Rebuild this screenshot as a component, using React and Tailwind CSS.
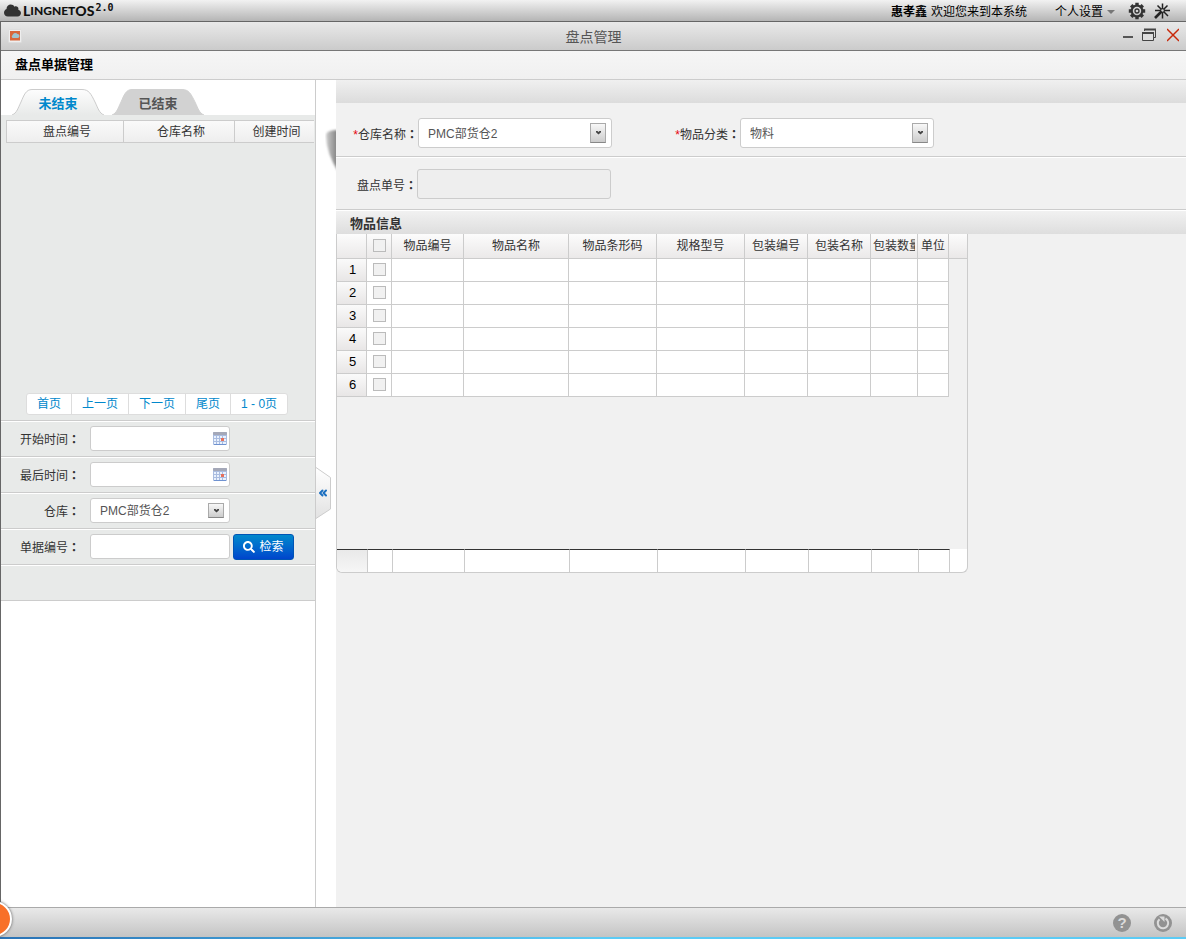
import React, { useState } from "react";
import { ChevronsLeft } from "lucide-react";
import { FaCloud, FaSearch } from "react-icons/fa";

const columns = [
  { label: "物品编号", width: "w-[72px]" },
  { label: "物品名称", width: "w-[105px]" },
  { label: "物品条形码", width: "w-[88px]" },
  { label: "规格型号", width: "w-[88px]" },
  { label: "包装编号", width: "w-[63px]" },
  { label: "包装名称", width: "w-[63px]" },
  { label: "包装数量", width: "w-[47px]" },
  { label: "单位", width: "w-[31px]" },
];

const pages = ["首页", "上一页", "下一页", "尾页", "1 - 0页"];

function Label({ htmlFor, required, className = "", children }) {
  return (
    <label htmlFor={htmlFor} className={`shrink-0 pt-[2px] text-right whitespace-nowrap ${className}`}>
      {required && <span className="text-red-600">*</span>}
      {children}
      <span className="font-['Noto_Sans_CJK_TC',sans-serif] font-bold">：</span>
    </label>
  );
}

function Select({ id, options, size = "large" }) {
  const large = size === "large";
  return (
    <div className={`relative ${large ? "w-[194px]" : "w-[140px]"}`}>
      <select
        id={id}
        className={`block w-full appearance-none rounded-[3px] border border-[#ccc] bg-white pt-px pl-[9px] text-[#555] ${large ? "h-[30px]" : "h-[25px]"}`}
      >
        {options.map((o) => (
          <option key={o}>{o}</option>
        ))}
      </select>
      <span
        className={`pointer-events-none absolute flex items-center justify-center border border-[#aaa] border-b-[#888] bg-gradient-to-b from-[#f8f8f8] to-[#ccc] ${large ? "top-[5px] right-[6px] h-5 w-4" : "top-[5px] right-[6px] h-[15px] w-4"}`}
      >
        <svg width="5" height="4" viewBox="0 0 5 4">
          <path d="M0 0h1.5l1 1 1-1H5v1.2L2.5 3.5 0 1.2z" fill="#444" />
        </svg>
      </span>
    </div>
  );
}

function CalendarIcon() {
  return (
    <svg width="14" height="13" viewBox="0 0 14 13">
      <rect width="14" height="13" rx="1" fill="#a9bce0" />
      <rect width="14" height="3" rx="1" fill="#a4a8b8" />
      <path
        d="M1 4h2v2H1zM4 4h2v2H4zM7 4h2v2H7zM10 4h3v2h-3zM1 7h2v2H1zM4 7h2v2H4zM7 7h1v2H7zM11 7h2v2h-2zM1 10h2v2H1zM4 10h2v2H4zM7 10h2v2H7zM10 10h3v2h-3z"
        fill="#e9f1fd"
      />
      <rect x="8" y="6" width="3" height="3" fill="#e5705c" />
      <path d="M1 12.500h12" stroke="#6f92d0" />
    </svg>
  );
}

function Tab({ active, onClick, children }) {
  return (
    <button
      type="button"
      onClick={onClick}
      className={`relative h-[26px] w-[92px] pt-1 text-center text-[13px] font-bold ${active ? "text-[#08c]" : "text-[#555]"}`}
    >
      <svg className="absolute inset-0 h-full w-full" viewBox="0 0 92 26">
        <defs>
          <linearGradient id="tabFill" x1="0" y1="0" x2="0" y2="1">
            <stop offset="0" stopColor="#fdfdfd" />
            <stop offset="1" stopColor="#e8eae9" />
          </linearGradient>
        </defs>
        <path
          d="M0 26C5 24 6 19 9 13C12 6 14 .5 20 .5H70C77 .5 79 5 83 13C86 19 87 24 92 26"
          fill={active ? "url(#tabFill)" : "#d2d2d2"}
          stroke={active ? "#ccc" : "#d2d2d2"}
        />
      </svg>
      <span className="relative">{children}</span>
    </button>
  );
}

function FilterRow({ children }) {
  return (
    <div className="flex h-9 items-center border-t border-[#ccc] shadow-[inset_0_1px_0_#fff]">
      {children}
    </div>
  );
}

function DateInput({ id }) {
  return (
    <div className="relative w-[140px]">
      <input id={id} className="block h-[25px] w-full rounded-[3px] border border-[#ccc] bg-white px-2" />
      <span className="pointer-events-none absolute top-[6px] right-[3px]">
        <CalendarIcon />
      </span>
    </div>
  );
}

function Check({ label }) {
  return (
    <input
      type="checkbox"
      aria-label={label}
      className="mx-auto mb-[2px] block h-[13px] w-[13px] appearance-none border border-[#bbb] bg-[#f1f1f1] checked:bg-[#08c]"
    />
  );
}

function TopBar() {
  return (
    <header className="flex h-[22px] items-center border-b border-[#666] bg-gradient-to-b from-[#f2f2f2] to-[#b5b5b5] pr-4 text-black">
      <div className="flex items-center pl-1">
        <FaCloud className="h-[17px] w-[17px] text-[#333]" />
        <div className="ml-[2px] flex items-center font-[Lato,sans-serif] font-black leading-none text-[#111]">
          <span className="text-[14px]">L</span>
          <span className="pt-px text-[12px]">INGNET</span>
          <span className="text-[14px]">OS</span>
          <span className="ml-px pb-[6px] font-['DejaVu_Sans_Mono',monospace] text-[10px] font-bold">2.0</span>
        </div>
      </div>
      <div className="ml-auto flex items-center">
        <div className="flex pt-[2px]">
          <b>惠孝鑫</b>
          <span className="ml-1">欢迎您来到本系统</span>
        </div>
        <button type="button" className="ml-7 flex items-center pt-[2px]">
          个人设置
          <span className="ml-1 border-x-4 border-t-4 border-x-transparent border-t-[#777]" />
        </button>
        <button type="button" aria-label="设置" className="ml-[13px]">
          <svg width="18" height="18" viewBox="0 0 18 18" fill="none" stroke="#333">
            <circle cx="9" cy="9" r="5.3" strokeWidth="2.2" />
            <circle cx="9" cy="9" r="2" strokeWidth="1.3" />
            <path
              d="M9 .8v3M9 14.2v3M.8 9h3M14.2 9h3M3.2 3.2l2 2M12.8 12.8l2 2M3.2 14.8l2-2M12.8 5.2l2-2"
              strokeWidth="3.400"
            />
          </svg>
        </button>
        <button type="button" aria-label="主题" className="ml-2">
          <svg width="16" height="16" viewBox="0 0 16 16" fill="none" stroke="#222">
            <path d="M8.500 .5v5M8.500 10v5.500M1 7.500h5M11 7.500h5M3.500 2.500l3.500 3.500M13.500 2.500L10 6M10 9l4 4" strokeWidth="1.5" />
            <path d="M7.500 8.500L1 15" strokeWidth="2.600" />
            <circle cx="8.500" cy="7.500" r="1.900" strokeWidth="1.2" />
          </svg>
        </button>
      </div>
    </header>
  );
}

function TitleBar() {
  return (
    <div className="flex h-[29px] items-center border-b border-[#777] bg-gradient-to-b from-[#e9e9e9] to-[#cbcbcb] pr-[7px] pl-[7px]">
      <div className="flex flex-1">
        <svg width="14" height="14" viewBox="0 0 14 14">
          <rect x=".5" y=".5" width="13" height="13" rx="1" fill="#eee" stroke="#ddd" />
          <rect x="2" y="2" width="10" height="9.500" fill="#d8663a" />
          <path d="M4.500 9a2 2 0 0 1 0-3 3 3 0 0 1 5-1 2 2 0 0 1 0 4z" fill="#9fc4cf" />
        </svg>
      </div>
      <h1 className="pt-px text-[14px] text-[#555]">盘点管理</h1>
      <div className="flex flex-1 items-center justify-end pb-[2px]">
        <button type="button" aria-label="最小化">
          <svg width="10" height="14" viewBox="0 0 10 14">
            <path d="M0 9h10" stroke="#555" strokeWidth="2" />
          </svg>
        </button>
        <button type="button" aria-label="还原" className="ml-[9px]">
          <svg width="14" height="14" viewBox="0 0 14 14" fill="none" stroke="#444">
            <path d="M2.500 3V1.500h11v8H12" />
            <path d="M2 1h12M2 2h12" />
            <path d="M.5 5.500h11v7H.5z" fill="#ddd" />
            <path d="M0 5h12" strokeWidth="2" />
          </svg>
        </button>
        <button type="button" aria-label="关闭" className="ml-[11px]">
          <svg width="12" height="14" viewBox="0 0 12 14">
            <path d="M0 1l12 12M12 1L0 13" stroke="#c8280a" strokeWidth="1.5" />
          </svg>
        </button>
      </div>
    </div>
  );
}

function Sidebar() {
  const [tab, setTab] = useState(0);

  return (
    <aside className="w-[315px] shrink-0 border-r border-[#ccc] bg-white">
      <div className="flex gap-2 pt-[9px] pl-[11px]">
        <Tab active={tab === 0} onClick={() => setTab(0)}>未结束</Tab>
        <Tab active={tab === 1} onClick={() => setTab(1)}>已结束</Tab>
      </div>

      <div className="border-b border-[#ccc] bg-[#e8eae9]">
        <div className="h-[278px] pt-[5px] pr-px pl-[5px]">
          <table className="w-full table-fixed border-separate border-spacing-0 border-y border-l border-[#ccc] bg-gradient-to-b from-[#fafafa] to-[#eee]">
            <thead>
              <tr className="h-[21px]">
                <th className="w-[117px] border-r border-[#ccc] p-0 pl-1 font-normal">盘点编号</th>
                <th className="w-[111px] border-r border-[#ccc] p-0 pl-1 font-normal">仓库名称</th>
                <th className="p-0 pl-1 font-normal">创建时间</th>
              </tr>
            </thead>
          </table>
        </div>

        {/* 分页 */}
        <nav className="flex h-[27px] pl-[25px]">
          <div className="flex h-[22px] divide-x divide-[#ddd] rounded-[3px] border border-[#ddd] bg-white">
            {pages.map((p) => (
              <a key={p} href="#" className="px-[10px] leading-5 text-[#08c]">{p}</a>
            ))}
          </div>
        </nav>

        <FilterRow>
          <Label htmlFor="start" className="w-[89px] pr-[10px]">开始时间</Label>
          <DateInput id="start" />
        </FilterRow>
        <FilterRow>
          <Label htmlFor="end" className="w-[89px] pr-[10px]">最后时间</Label>
          <DateInput id="end" />
        </FilterRow>
        <FilterRow>
          <Label htmlFor="store" className="w-[89px] pr-[10px]">仓库</Label>
          <Select id="store" size="small" options={["PMC部货仓2"]} />
        </FilterRow>
        <FilterRow>
          <Label htmlFor="bill" className="w-[89px] pr-[10px]">单据编号</Label>
          <input id="bill" className="h-[25px] w-[140px] rounded-[3px] border border-[#ccc] bg-white px-2" />
          <button
            type="button"
            className="ml-[3px] flex h-[26px] w-[61px] items-center justify-center gap-1 rounded-[3px] border border-[#0055b5] bg-gradient-to-b from-[#0088cc] to-[#0044cc] text-white"
          >
            <FaSearch className="h-3 w-3" />
            检索
          </button>
        </FilterRow>
        <FilterRow />
      </div>
    </aside>
  );
}

function Gutter() {
  return (
    <div className="relative w-5 shrink-0 bg-white">
      {/* 面板阴影 */}
      <svg className="absolute top-[47px] right-0" width="11" height="46" viewBox="0 0 11 46">
        <defs>
          <linearGradient id="shade" x1="0" y1="0" x2="1" y2="0">
            <stop offset="0" stopColor="#ccc" />
            <stop offset="1" stopColor="#777" />
          </linearGradient>
          <filter id="soft">
            <feGaussianBlur stdDeviation="1" />
          </filter>
        </defs>
        <path d="M1 8Q1 3 14 3V46Q1 26 1 8z" fill="url(#shade)" filter="url(#soft)" />
      </svg>
      <button type="button" aria-label="收起" className="absolute top-[387px] left-0 flex h-[52px] w-[15px] items-center">
        <svg className="absolute inset-0" width="15" height="52" viewBox="0 0 15 52">
          <defs>
            <linearGradient id="handle" x1="0" y1="0" x2="0" y2="1">
              <stop offset="0" stopColor="#fff" />
              <stop offset="1" stopColor="#e2e2e2" />
            </linearGradient>
          </defs>
          <path d="M0 .5L14.500 10.500V42L0 51.500" fill="url(#handle)" stroke="#ccc" />
        </svg>
        <ChevronsLeft className="relative ml-px h-3 w-3 text-[#1a6fc0]" strokeWidth={4} />
      </button>
    </div>
  );
}

function ItemGrid() {
  return (
    <div className="w-[632px] rounded-b-md border-x border-b border-[#ccc] bg-[#f1f1f1]">
      <div className="min-h-[315px]">
        <div className="flex">
          <table className="w-[612px] table-fixed border-separate border-spacing-0">
            <thead>
              <tr className="h-[25px] bg-gradient-to-b from-[#fcfcfc] to-[#eae8e8]">
                <th className="w-[30px] border-r border-b border-[#ccc] p-0" />
                <th className="w-[25px] border-r border-b border-[#ccc] p-0">
                  <Check label="全选" />
                </th>
                {columns.map((c) => (
                  <th
                    key={c.label}
                    className={`${c.width} overflow-hidden border-r border-b border-[#ccc] p-0 font-normal whitespace-nowrap`}
                  >
                    {c.label === "包装数量" ? (
                      <div className="mx-[2px] overflow-hidden text-left">{c.label}</div>
                    ) : (
                      c.label
                    )}
                  </th>
                ))}
              </tr>
            </thead>
            <tbody>
              {[1, 2, 3, 4, 5, 6].map((n) => (
                <tr key={n} className="h-[23px] bg-white">
                  <td className="border-r border-b border-[#ccc] bg-gradient-to-b from-[#fafafa] to-[#e8e6e6] p-0 pl-[2px] text-center text-[13px] leading-4 text-black">
                    {n}
                  </td>
                  <td className="border-r border-b border-[#ccc] p-0">
                    <Check label={`选择第${n}行`} />
                  </td>
                  {columns.map((c) => (
                    <td key={c.label} className="border-r border-b border-[#ccc] p-0" />
                  ))}
                </tr>
              ))}
            </tbody>
          </table>
          <div className="h-[25px] flex-1 border-b border-[#ccc] bg-gradient-to-b from-[#fcfcfc] to-[#eae8e8]" />
        </div>
      </div>

      {/* 合计行 */}
      <div className="rounded-b-md bg-white">
        <table className="w-[613px] table-fixed border-separate border-spacing-0">
          <tbody>
            <tr className="h-[23px]">
              <td className="w-[31px] rounded-bl-md border-t border-r border-t-[#333] border-r-[#ccc] bg-gradient-to-b from-[#e9e9e9] to-[#f6f6f6] p-0" />
              <td className="w-[25px] border-t border-r border-t-[#333] border-r-[#ccc] p-0" />
              {columns.map((c) => (
                <td key={c.label} className={`${c.width} border-t border-r border-t-[#333] border-r-[#ccc] p-0`} />
              ))}
            </tr>
          </tbody>
        </table>
      </div>
    </div>
  );
}

export default function App() {
  return (
    <div className="flex min-h-screen flex-col overflow-hidden bg-[#f1f1f1] font-['Liberation_Sans','Noto_Sans_CJK_SC',sans-serif] text-[12px] leading-[18px] text-[#333]">
      <TopBar />

      <div className="flex flex-1 flex-col border-l border-[#666]">
        <TitleBar />
        <h2 className="h-[29px] border-b border-[#ccc] bg-gradient-to-b from-[#f6f6f6] to-[#f0f0f0] pl-[14px] text-[13px] leading-7 font-bold text-black">
          盘点单据管理
        </h2>

        <div className="flex flex-1">
          <Sidebar />
          <Gutter />

          <main className="min-w-0 flex-1">
            <div className="h-[23px] bg-gradient-to-b from-[#f0f0f0] to-[#dcdcdc]" />

            <div className="flex h-[54px] border-b border-[#ccc] pt-[15px]">
              <div className="flex h-[30px] w-[322px] items-center">
                <Label htmlFor="warehouse" required className="w-[82px]">仓库名称</Label>
                <Select id="warehouse" options={["PMC部货仓2"]} />
              </div>
              <div className="flex h-[30px] items-center">
                <Label htmlFor="category" required className="w-[82px]">物品分类</Label>
                <Select id="category" options={["物料"]} />
              </div>
            </div>

            <div className="flex h-[53px] items-center border-b border-[#ccc] pt-[2px] shadow-[inset_0_1px_0_#fff]">
              <Label htmlFor="billNo" className="w-[81px]">盘点单号</Label>
              <input
                id="billNo"
                readOnly
                className="h-[30px] w-[194px] rounded-[3px] border border-[#ccc] bg-[#eee] px-2"
              />
            </div>

            <h3 className="h-6 bg-gradient-to-b from-[#f2f2f2] to-[#dedede] pl-[14px] text-[13px] leading-7 font-bold shadow-[inset_0_1px_0_#fff]">
              物品信息
            </h3>
            <ItemGrid />
          </main>
        </div>
      </div>

      <footer className="relative">
        <div className="flex h-[30px] items-center justify-end gap-[23px] border-t border-[#aaa] bg-gradient-to-b from-[#e9e9e9] to-[#c4c4c4] pr-[14px]">
          <button type="button" aria-label="帮助" className="flex h-[18px] w-[18px] items-center justify-center rounded-full bg-[#929292] text-[15px] font-bold text-[#dcdcdc]">
            ?
          </button>
          <button type="button" aria-label="刷新">
            <svg width="18" height="18" viewBox="0 0 18 18">
              <circle cx="9" cy="9" r="9" fill="#929292" />
              <path d="M11.500 4.500A5.200 5.200 0 1 1 5.500 5.200" fill="none" stroke="#dcdcdc" strokeWidth="2" />
              <path d="M5 2.500h5.500V8L8.800 6.300z" fill="#dcdcdc" />
            </svg>
          </button>
        </div>
        <div className="h-[2px] bg-gradient-to-r from-[#2a72b5] via-[#5ccbf5] to-[#5ccbf5]" />
        <button
          type="button"
          aria-label="开始"
          className="absolute -top-[6px] -left-6 h-9 w-9 rounded-full border-2 border-white bg-[#f87028] shadow-[0_0_3px_#555]"
        />
      </footer>
    </div>
  );
}
